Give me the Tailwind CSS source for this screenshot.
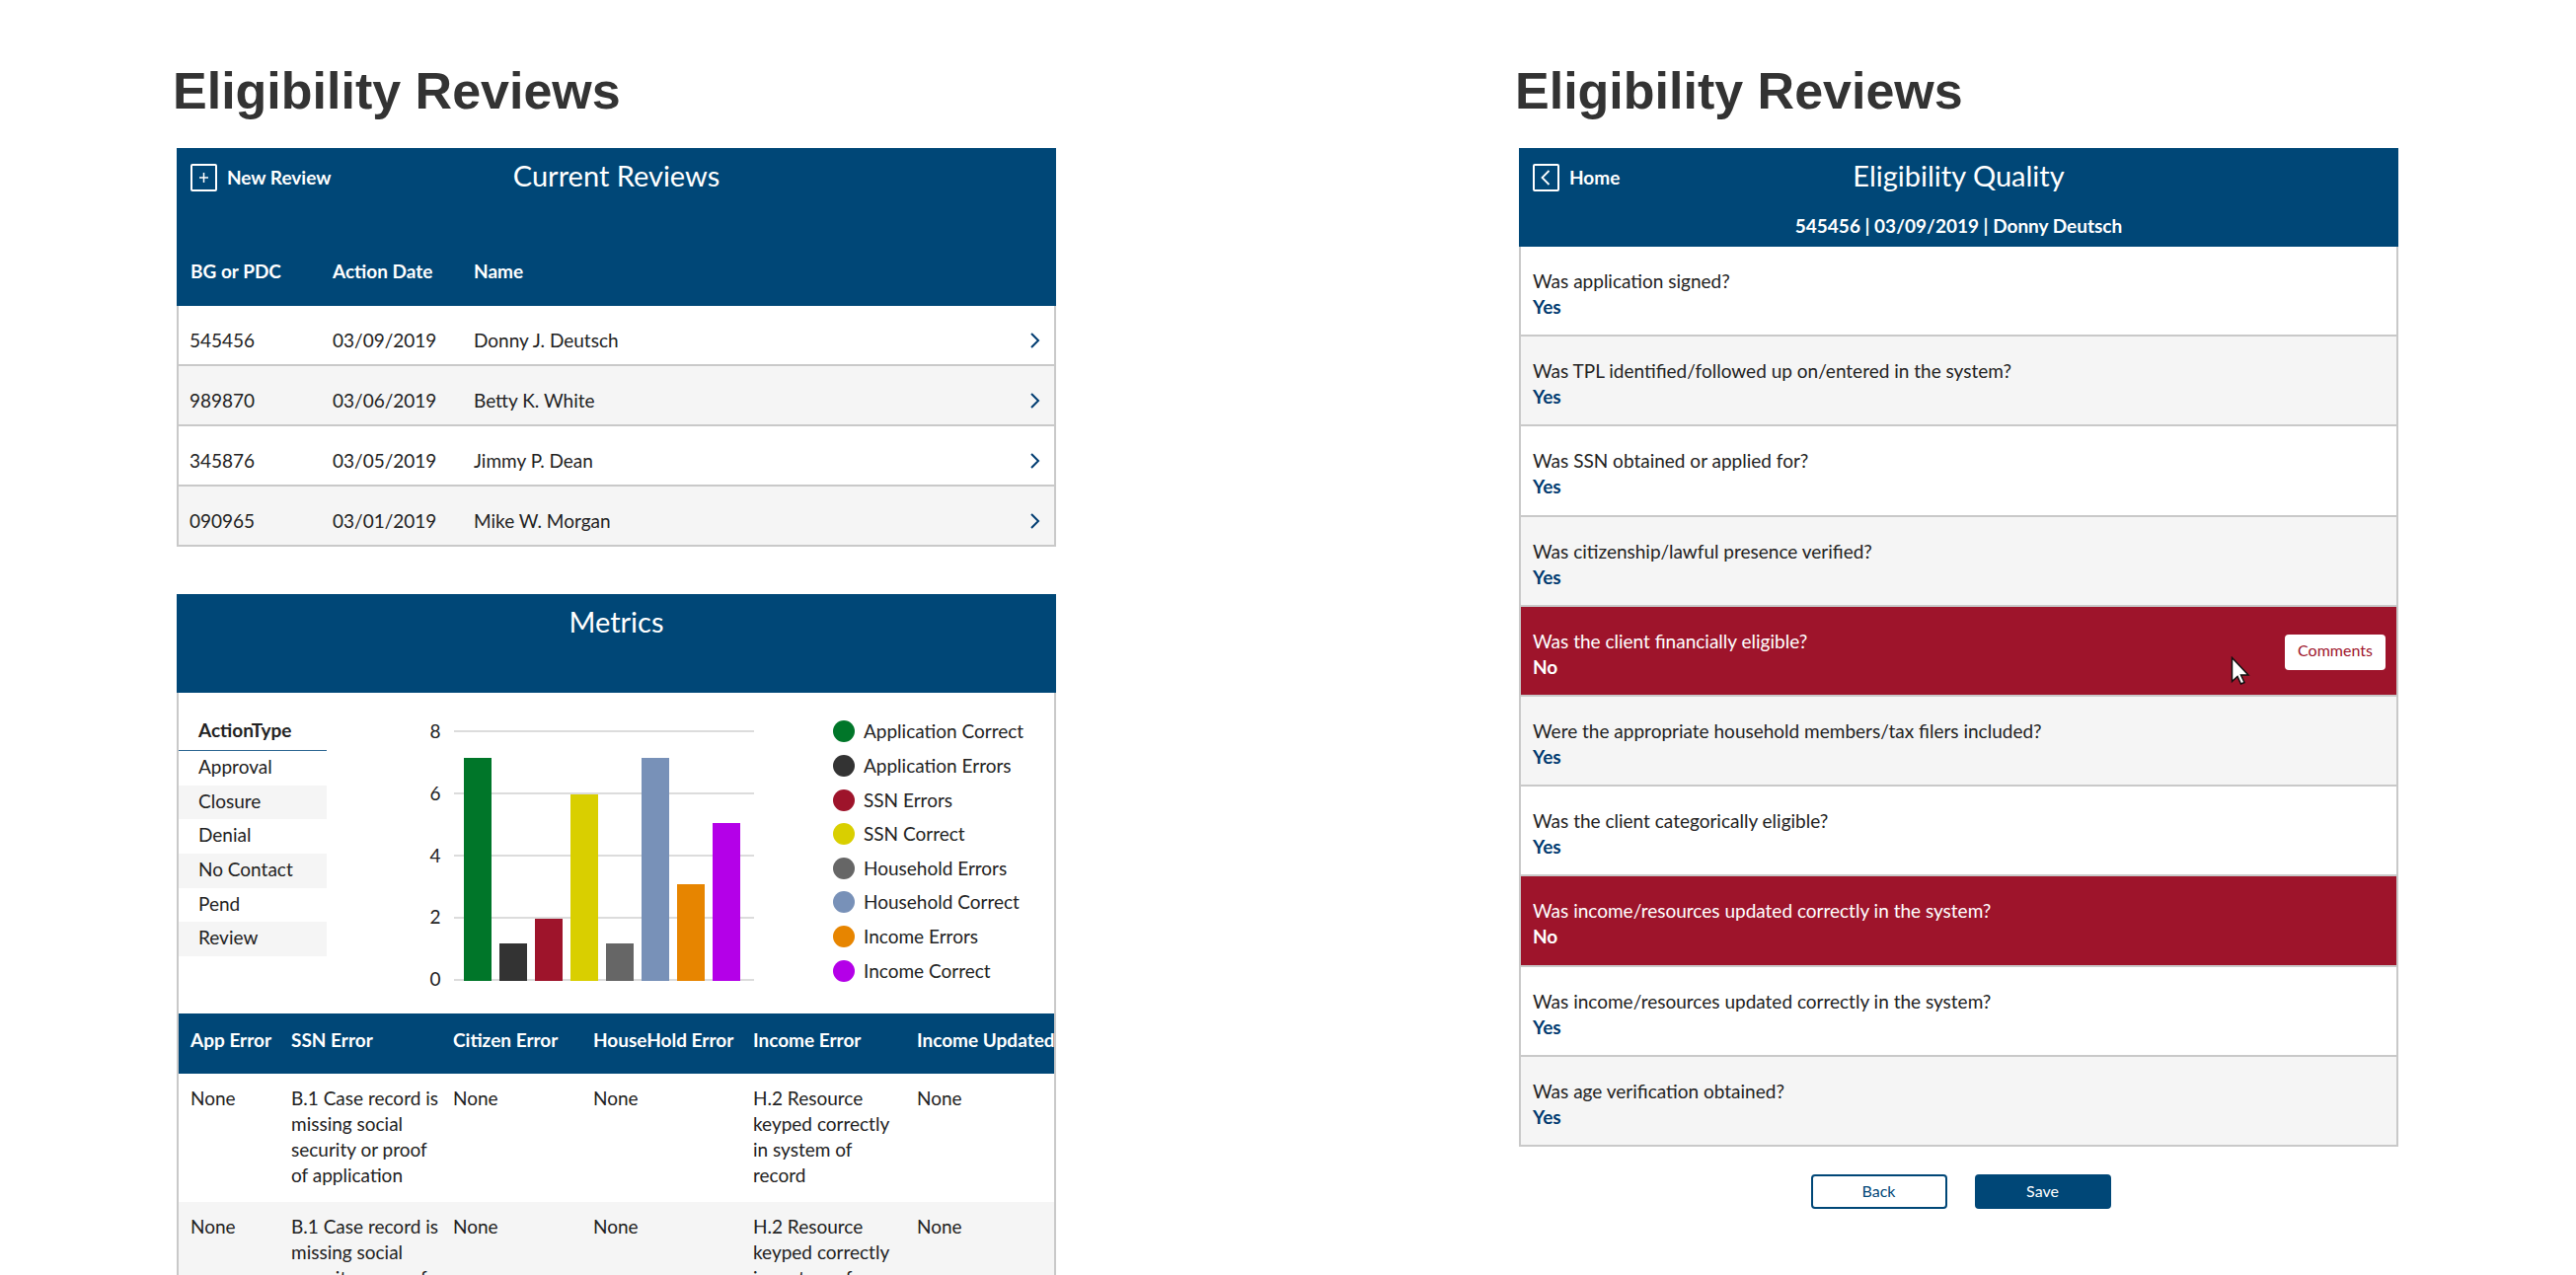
<!DOCTYPE html>
<html lang="en">
<head>
<meta charset="utf-8">
<meta name="viewport" content="width=device-width, initial-scale=1">
<title>Eligibility Reviews</title>
<script src="https://cdn.jsdelivr.net/npm/@tailwindcss/browser@4"></script>
</head>
<body class="bg-white font-['Lato',sans-serif] text-[19px] leading-[26px] text-[#222]">
<div class="grid grid-cols-2 gap-[469px] pt-[62px] pr-[180px] pl-[179px]">

  <!-- Dashboard -->
  <main class="min-w-0">
    <h1 class="-ml-1 font-['Liberation_Sans',sans-serif] text-[52px] leading-[60px] font-bold whitespace-nowrap text-[#333]">Eligibility Reviews</h1>

    <section class="mt-7">
      <header class="grid grid-cols-[1fr_auto_1fr] items-start bg-[#004777] px-3.5 pt-2.5 text-white">
        <button type="button" class="flex h-10 items-center gap-2.5 justify-self-start font-bold">
          <svg class="h-7 w-[27px]" viewBox="0 0 27 28" fill="none" stroke="currentColor" stroke-width="2" aria-hidden="true"><rect x="1" y="1" width="25" height="26" rx="1"/><path d="M9 14h9M13.500 9v10" stroke-width="1.500"/></svg>
          New Review
        </button>
        <h2 class="text-[29px] leading-9">Current Reviews</h2>
      </header>
      <table class="w-full table-fixed border-separate border-spacing-0 text-left">
        <thead class="bg-[#004777] text-white">
          <tr class="h-[110px]">
            <th class="w-[158px] pt-10 pl-3.5">BG or PDC</th>
            <th class="w-[143px] pt-10">Action Date</th>
            <th class="pt-10">Name</th>
            <th class="w-12" aria-label="Open"></th>
          </tr>
        </thead>
        <tbody class="[&_td]:border-b-2 [&_td]:border-[#c9c9c9] [&_td]:pt-2.5 [&_td:first-child]:border-l-2 [&_td:first-child]:pl-[11px] [&_td:last-child]:border-r-2 [&_tr]:h-[61px] [&_tr:nth-child(even)]:bg-[#f5f5f5]">
          <tr><td>545456</td><td>03/09/2019</td><td>Donny J. Deutsch</td><td><a href="#" aria-label="Open review 545456" class="block pl-[22px]"><svg class="h-4 w-2.5" viewBox="0 0 10 16" fill="none" stroke="#003c71" stroke-width="2"><path d="M1 1l7 7-7 7"/></svg></a></td></tr>
          <tr><td>989870</td><td>03/06/2019</td><td>Betty K. White</td><td><a href="#" aria-label="Open review 989870" class="block pl-[22px]"><svg class="h-4 w-2.5" viewBox="0 0 10 16" fill="none" stroke="#003c71" stroke-width="2"><path d="M1 1l7 7-7 7"/></svg></a></td></tr>
          <tr><td>345876</td><td>03/05/2019</td><td>Jimmy P. Dean</td><td><a href="#" aria-label="Open review 345876" class="block pl-[22px]"><svg class="h-4 w-2.5" viewBox="0 0 10 16" fill="none" stroke="#003c71" stroke-width="2"><path d="M1 1l7 7-7 7"/></svg></a></td></tr>
          <tr><td>090965</td><td>03/01/2019</td><td>Mike W. Morgan</td><td><a href="#" aria-label="Open review 090965" class="block pl-[22px]"><svg class="h-4 w-2.5" viewBox="0 0 10 16" fill="none" stroke="#003c71" stroke-width="2"><path d="M1 1l7 7-7 7"/></svg></a></td></tr>
        </tbody>
      </table>
    </section>

    <section class="mt-12">
      <header class="h-[100px] bg-[#004777] pt-2.5 text-center text-white">
        <h2 class="text-[29px] leading-9">Metrics</h2>
      </header>
      <div class="border-x-2 border-[#c9c9c9]">
        <div class="flex h-[325px] items-start justify-between">
          <div class="w-[150px] pt-[22px]">
            <h3 class="border-b border-[#2b6591] pb-[5px] pl-5 leading-[31px] font-bold">ActionType</h3>
            <ul class="grid h-[208px] grid-rows-6 [&_li]:pl-5 [&_li]:leading-[31px] [&_li:nth-child(even)]:bg-[#f5f5f5]">
              <li>Approval</li><li>Closure</li><li>Denial</li><li>No Contact</li><li>Pend</li><li>Review</li>
            </ul>
          </div>

          <!-- Bar chart: 0 to 8, two units every 63px -->
          <div class="flex pt-[26px] pl-6">
            <div class="flex h-[277px] w-6 flex-col justify-between"><span>8</span><span>6</span><span>4</span><span>2</span><span>0</span></div>
            <div class="relative mt-3 h-[254px] w-[304px]">
              <div class="absolute inset-0 flex flex-col justify-between [&_i]:h-0.5 [&_i]:bg-[#dcdcdc]"><i></i><i></i><i></i><i></i><i></i></div>
              <div class="relative flex h-full items-end gap-2 px-2.5 [&_div]:w-7">
                <div class="bg-[#007629]" style="height:226px"></div>
                <div class="bg-[#333333]" style="height:38px"></div>
                <div class="bg-[#9e142b]" style="height:63px"></div>
                <div class="bg-[#d9cf00]" style="height:189px"></div>
                <div class="bg-[#666666]" style="height:38px"></div>
                <div class="bg-[#7891b8]" style="height:226px"></div>
                <div class="bg-[#e78500]" style="height:98px"></div>
                <div class="bg-[#b400e8]" style="height:160px"></div>
              </div>
            </div>
          </div>

          <ul class="mt-[22px] grid h-[277px] w-[224px] grid-rows-8 [&_li]:flex [&_li]:items-center [&_li]:gap-[9px] [&_span]:size-[22px] [&_span]:rounded-full">
            <li><span class="bg-[#007629]"></span>Application Correct</li>
            <li><span class="bg-[#333333]"></span>Application Errors</li>
            <li><span class="bg-[#9e142b]"></span>SSN Errors</li>
            <li><span class="bg-[#d9cf00]"></span>SSN Correct</li>
            <li><span class="bg-[#666666]"></span>Household Errors</li>
            <li><span class="bg-[#7891b8]"></span>Household Correct</li>
            <li><span class="bg-[#e78500]"></span>Income Errors</li>
            <li><span class="bg-[#b400e8]"></span>Income Correct</li>
          </ul>
        </div>

        <div class="overflow-hidden">
          <table class="w-full table-fixed text-left">
            <thead class="bg-[#004777] text-white">
              <tr class="h-[61px] align-top whitespace-nowrap [&_th]:pt-3.5 [&_th]:pl-3">
                <th class="w-[102px]">App Error</th><th class="w-[164px]">SSN Error</th><th class="w-[142px]">Citizen Error</th><th class="w-[162px]">HouseHold Error</th><th class="w-[166px]">Income Error</th><th>Income Updated</th>
              </tr>
            </thead>
            <tbody class="[&_td]:pl-3 [&_tr]:h-[130px] [&_tr]:align-top [&_td]:pt-3 [&_tr:nth-child(even)]:bg-[#f5f5f5] [&_td:nth-child(5)]:pr-4">
              <tr><td>None</td><td>B.1 Case record is missing social security or proof of application</td><td>None</td><td>None</td><td>H.2 Resource keyped correctly in system of record</td><td>None</td></tr>
              <tr><td>None</td><td>B.1 Case record is missing social security or proof of application</td><td>None</td><td>None</td><td>H.2 Resource keyped correctly in system of record</td><td>None</td></tr>
            </tbody>
          </table>
        </div>
      </div>
    </section>
  </main>

  <!-- Review detail -->
  <section class="min-w-0">
    <h1 class="-ml-1 font-['Liberation_Sans',sans-serif] text-[52px] leading-[60px] font-bold whitespace-nowrap text-[#333]">Eligibility Reviews</h1>

    <header class="mt-7 h-[100px] bg-[#004777] px-3.5 pt-2.5 text-white">
      <div class="grid grid-cols-[1fr_auto_1fr] items-start">
        <a href="#" class="flex h-10 items-center gap-2.5 justify-self-start font-bold">
          <svg class="h-7 w-[27px]" viewBox="0 0 27 28" fill="none" stroke="currentColor" stroke-width="2" aria-hidden="true"><rect x="1" y="1" width="25" height="26" rx="1"/><path d="M16.500 7l-7 7 7 7" stroke-width="1.800"/></svg>
          Home
        </a>
        <h2 class="text-[29px] leading-9">Eligibility Quality</h2>
      </div>
      <p class="mt-4 text-center font-bold">545456 | 03/09/2019 | Donny Deutsch</p>
    </header>

    <dl class="grid h-[912px] grid-rows-10 border-x-2 border-[#c9c9c9] [&_dd]:font-bold [&>div]:border-b-2 [&>div]:border-[#c9c9c9] [&>div]:px-3 [&>div]:pt-[22px]">
      <div><dt>Was application signed?</dt><dd class="text-[#003a70]">Yes</dd></div>
      <div class="bg-[#f5f5f5]"><dt>Was TPL identified/followed up on/entered in the system?</dt><dd class="text-[#003a70]">Yes</dd></div>
      <div><dt>Was SSN obtained or applied for?</dt><dd class="text-[#003a70]">Yes</dd></div>
      <div class="bg-[#f5f5f5]"><dt>Was citizenship/lawful presence verified?</dt><dd class="text-[#003a70]">Yes</dd></div>
      <div class="relative bg-[#9e142b] text-white">
        <dt>Was the client financially eligible?</dt>
        <dd>No
          <button type="button" class="absolute top-7 right-[11px] h-9 w-[102px] rounded bg-white pb-1 text-base font-normal text-[#9e142b]">Comments</button>
        </dd>
        <svg class="absolute top-[50px] right-[148px] h-[30px] w-5" viewBox="0 0 20 30" fill="#fff" stroke="#111" stroke-width="1.500" aria-hidden="true"><path d="M1.500 1.500v24l5.500-5 3.500 7.500 3.500-1.500-3.500-7.500h7.500z"/></svg>
      </div>
      <div class="bg-[#f5f5f5]"><dt>Were the appropriate household members/tax filers included?</dt><dd class="text-[#003a70]">Yes</dd></div>
      <div><dt>Was the client categorically eligible?</dt><dd class="text-[#003a70]">Yes</dd></div>
      <div class="bg-[#9e142b] text-white"><dt>Was income/resources updated correctly in the system?</dt><dd>No</dd></div>
      <div><dt>Was income/resources updated correctly in the system?</dt><dd class="text-[#003a70]">Yes</dd></div>
      <div class="bg-[#f5f5f5]"><dt>Was age verification obtained?</dt><dd class="text-[#003a70]">Yes</dd></div>
    </dl>

    <div class="mt-7 flex justify-center gap-7 pl-1 text-base">
      <button type="button" class="h-[35px] w-[138px] rounded border-2 border-[#004777] pb-0.5 text-[#004777]">Back</button>
      <button type="button" class="h-[35px] w-[138px] rounded bg-[#004777] pb-0.5 text-white">Save</button>
    </div>
  </section>
</div>
</body>
</html>
